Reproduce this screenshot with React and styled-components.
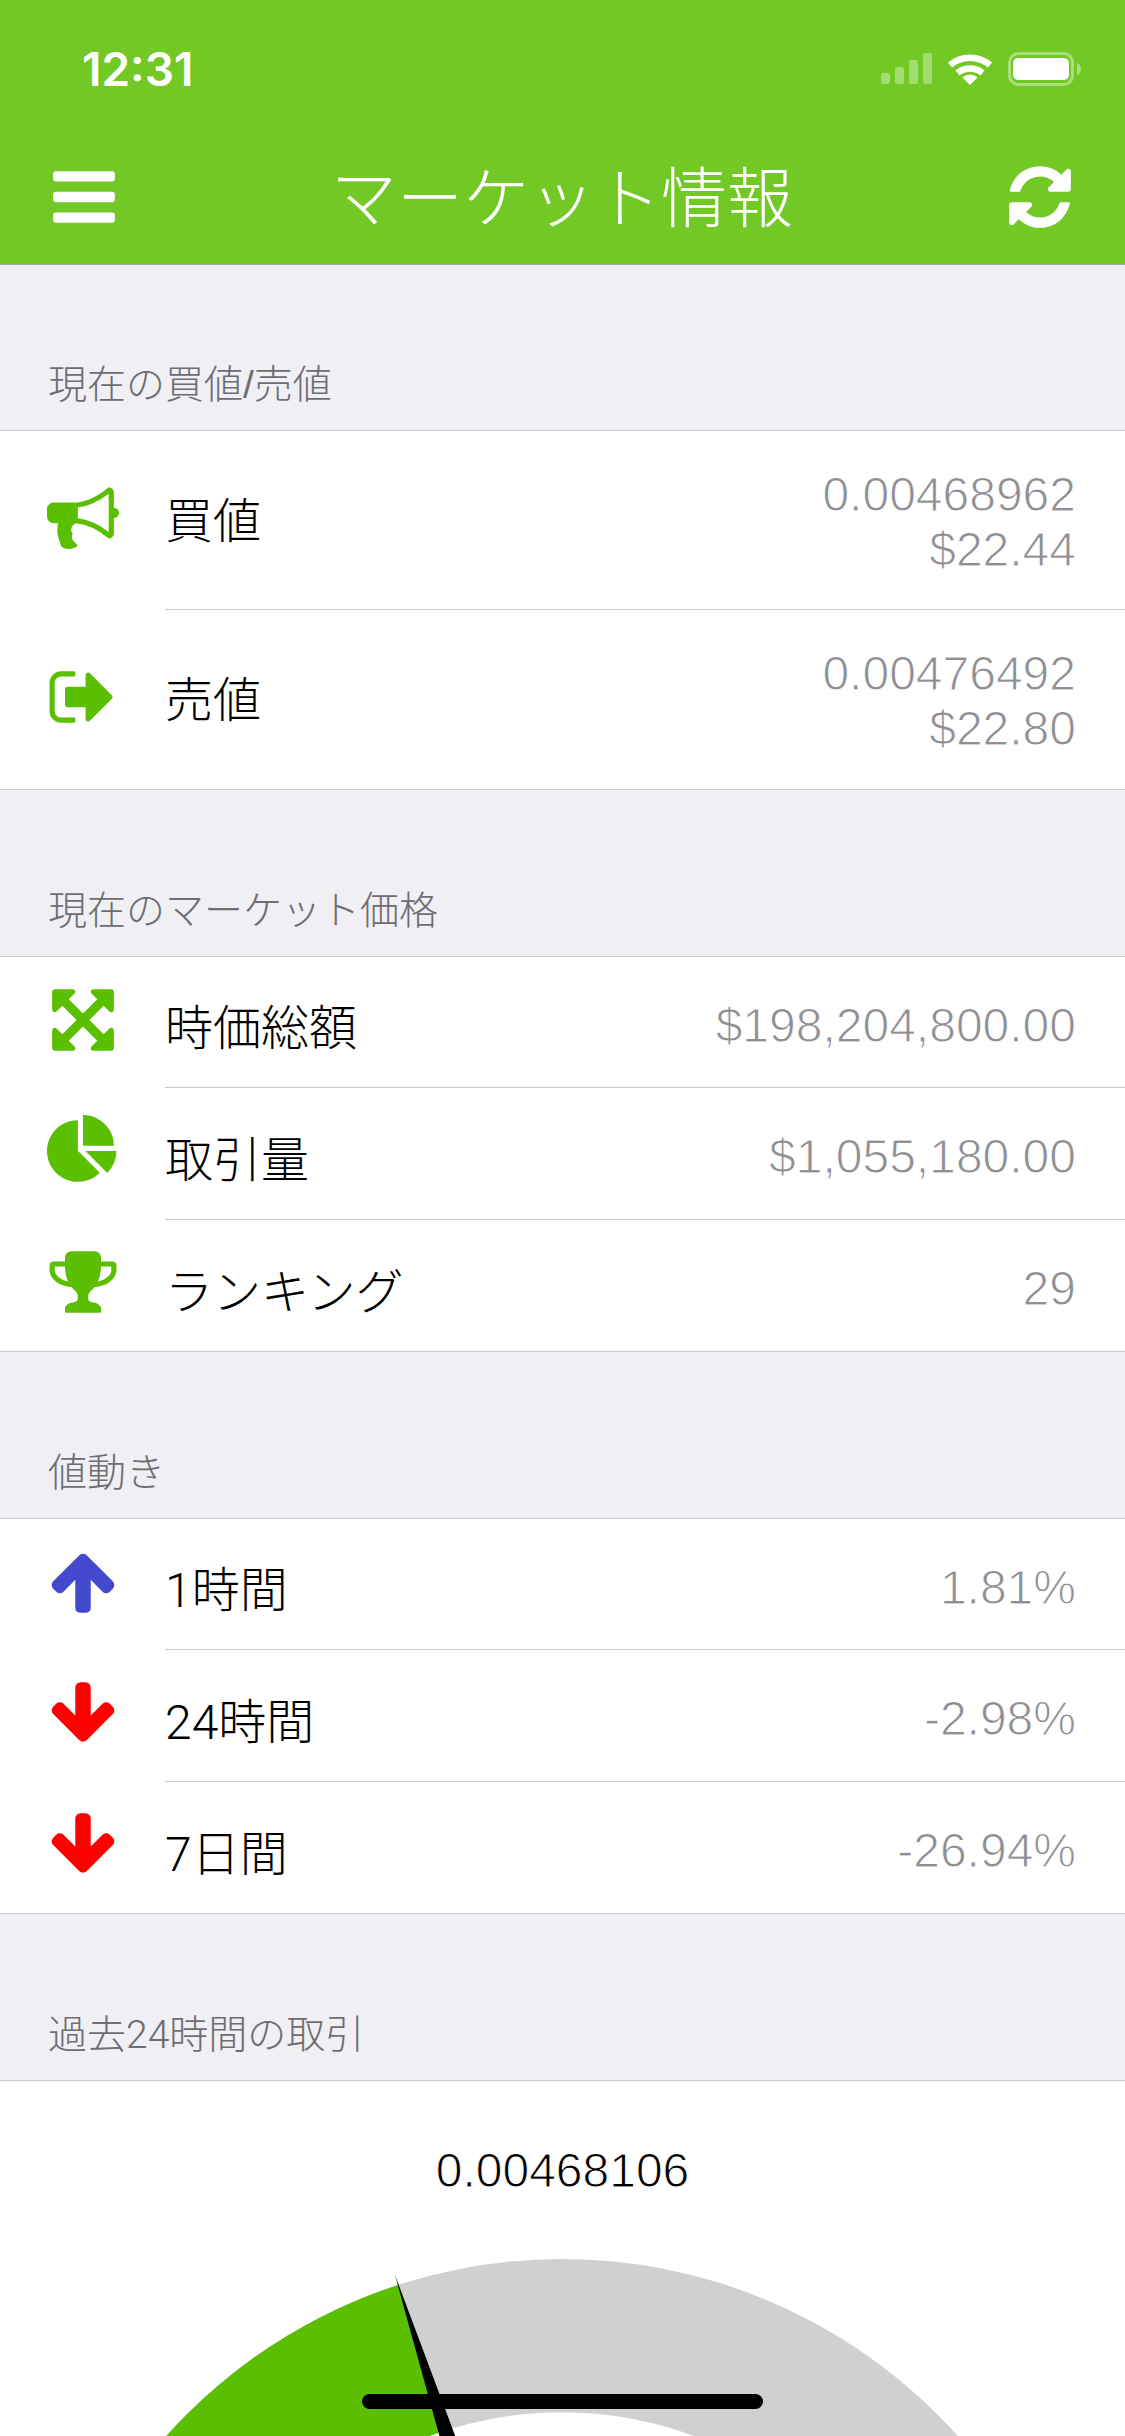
import React from "react";
import styled, { createGlobalStyle } from "styled-components";

const FONT = `Roboto, "Liberation Sans", "Noto Sans CJK JP", sans-serif`;
const HELV = `"Liberation Sans", "Noto Sans CJK JP", sans-serif`;

const Global = createGlobalStyle`
  html, body {
    margin: 0;
    padding: 0;
    width: 1125px;
    height: 2436px;
    overflow: hidden;
    background: #efeff4;
    font-family: ${FONT};
  }
`;

const Page = styled.div`
  width: 1125px;
  height: 2436px;
  overflow: hidden;
  display: flex;
  flex-direction: column;
`;

const Header = styled.header`
  flex: none;
  height: 264px;
  background: #72c926;
  border-bottom: 1px solid #a7a7aa;
  color: #fff;
  display: flex;
  flex-direction: column;
`;

const StatusBar = styled.div`
  height: 138px;
  display: flex;
  align-items: center;
  justify-content: space-between;
  padding: 0 44px 0 82px;
`;

const Clock = styled.span`
  font: 600 46px/1 Inter, "Liberation Sans", sans-serif;
  letter-spacing: 0;
`;

const NavBar = styled.div`
  height: 118px;
  display: flex;
  align-items: center;
  justify-content: space-between;
  padding: 0 49px 0 48px;
`;

const Title = styled.h1`
  margin: 6px 0 0;
  font: 300 66px/1 ${FONT};
  white-space: nowrap;
`;

const Glyph = styled.svg`
  display: block;
  flex: none;
  width: 72px;
  height: 72px;
  fill: ${(p) => p.$color || "currentColor"};
`;

const SectionHeader = styled.div`
  flex: none;
  height: ${(p) => (p.$first ? 165 : 166)}px;
  box-sizing: border-box;
  display: flex;
  align-items: flex-end;
  padding: 0 48px 25px;
  font: 300 39px/40px ${(p) => (p.$first ? HELV : FONT)};
  color: #6d6d72;
`;

const List = styled.section`
  flex: none;
  background: #fff;
  border-top: 1px solid #c8c7cc;
  border-bottom: 1px solid #c8c7cc;
`;

const Row = styled.div`
  height: ${(p) => (p.$tall ? "179px" : "131.33px")};
  display: flex;
  align-items: stretch;
  padding-left: 47px;
`;

const IconSlot = styled.div`
  flex: none;
  width: 118px;
  display: flex;
  align-items: center;
  & > svg {
    margin-top: -6px;
  }
`;

const Body = styled.div`
  flex: 1;
  display: flex;
  align-items: center;
  justify-content: space-between;
  padding-right: 49px;
  box-sizing: border-box;
  border-bottom: ${(p) => (p.$last ? "0" : "1px solid #c8c7cc")};
`;

const Label = styled.span`
  font: 300 48px/1.2 ${FONT};
  color: #000;
  margin-top: ${(p) => (p.$tall ? 3 : 14)}px;
`;

const Value = styled.div`
  font: 400 48px/55px ${HELV};
  color: #8e8e93;
  text-align: right;
  -webkit-text-stroke: 1px #fff;
  margin-top: ${(p) => (p.$tall ? 3 : 7)}px;
`;

const GaugeCard = styled.section`
  flex: 1;
  background: #fff;
  border-top: 1px solid #c8c7cc;
  display: flex;
  flex-direction: column;
  align-items: center;
  padding-top: 62px;
`;

const Price = styled.div`
  font: 400 48px/56px ${HELV};
  color: #000;
  -webkit-text-stroke: 1px #fff;
`;

const GaugeSvg = styled.svg`
  display: block;
  flex: none;
  margin-top: 60px;
  width: 1125px;
  height: 177px;
  overflow: hidden;
`;

const ICONS = {
  bars: "M1664 1344v128q0 26-19 45t-45 19h-1408q-26 0-45-19t-19-45v-128q0-26 19-45t45-19h1408q26 0 45 19t19 45zm0-512v128q0 26-19 45t-45 19h-1408q-26 0-45-19t-19-45v-128q0-26 19-45t45-19h1408q26 0 45 19t19 45zm0-512v128q0 26-19 45t-45 19h-1408q-26 0-45-19t-19-45v-128q0-26 19-45t45-19h1408q26 0 45 19t19 45z",
  refresh: "M1639 1056q0 5-1 7-64 268-268 434.5t-478 166.5q-146 0-282.5-55t-243.5-157l-129 129q-19 19-45 19t-45-19-19-45v-448q0-26 19-45t45-19h448q26 0 45 19t19 45-19 45l-137 137q71 66 161 102t187 36q134 0 250-65t186-179q11-17 53-117 8-23 30-23h192q13 0 22.5 9.5t9.5 22.5zm25-800v448q0 26-19 45t-45 19h-448q-26 0-45-19t-19-45 19-45l138-138q-148-137-349-137-134 0-250 65t-186 179q-11 17-53 117-8 23-30 23h-199q-13 0-22.5-9.5t-9.5-22.5v-7q65-268 270-434.5t480-166.5q146 0 284 55.5t245 156.5l130-129q19-19 45-19t45 19 19 45z",
  bullhorn: "M1664 640q53 0 90.5 37.5t37.5 90.5-37.5 90.5-90.5 37.5v384q0 52-38 90t-90 38q-417-347-812-380-58 19-91 66t-31 100.5 40 92.5q-20 33-23 65.5t6 58 33.5 55 48 50 61.5 50.5q-29 58-111.5 83t-168.5 11.5-132-55.5q-7-23-29.5-87.5t-32-94.5-23-89-15-101 3.5-98.5 22-110.5h-122q-66 0-113-47t-47-113v-192q0-66 47-113t113-47h480q435 0 896-384 52 0 90 38t38 90v384zm-128 604v-954q-394 302-768 343v270q377 42 768 341z",
  signOut: "M704 1440q0 4 1 20t.5 26.5-3 23.5-10 19.5-20.5 6.5h-320q-119 0-203.5-84.5t-84.5-203.5v-704q0-119 84.5-203.5t203.5-84.5h320q13 0 22.5 9.5t9.5 22.5q0 4 1 20t.5 26.5-3 23.5-10 19.5-20.5 6.5h-320q-66 0-113 47t-47 113v704q0 66 47 113t113 47h312l11.5 1 11.5 3 8 5.5 7 9 2 13.5zm928-544q0 26-19 45l-544 544q-19 19-45 19t-45-19-19-45v-288h-448q-26 0-45-19t-19-45v-384q0-26 19-45t45-19h448v-288q0-26 19-45t45-19 45 19l544 544q19 19 19 45z",
  expand: "M1411 541l-355 355 355 355 144-144q29-31 70-14 39 17 39 59v448q0 26-19 45t-45 19h-448q-42 0-59-40-17-39 14-69l144-144-355-355-355 355 144 144q31 30 14 69-17 40-59 40h-448q-26 0-45-19t-19-45v-448q0-42 40-59 39-17 69 14l144 144 355-355-355-355-144 144q-19 19-45 19-12 0-24-5-40-17-40-59v-448q0-26 19-45t45-19h448q42 0 59 40 17 39-14 69l-144 144 355 355 355-355-144-144q-31-30-14-69 17-40 59-40h448q26 0 45 19t19 45v448q0 42-39 59-13 5-25 5-26 0-45-19z",
  pie: "M768 890l546 546q-106 108-247.5 168t-298.5 60q-209 0-385.5-103t-279.5-279.5-103-385.5 103-385.5 279.5-279.5 385.5-103v762zm187 6h773q0 157-60 298.5t-168 247.5zm709-128h-768v-768q209 0 385.5 103t279.5 279.5 103 385.5z",
  trophy: "M522 883q-74-162-74-371h-256v96q0 78 94.5 162t235.5 113zm1078-275v-96h-256q0 209-74 371 141-29 235.5-113t94.5-162zm128-128v128q0 71-41.5 143t-112 130-173 97.5-215.5 44.5q-42 54-95 95-38 34-52.5 72.5t-14.5 89.5q0 54 30.5 91t97.5 37q75 0 133.5 45.5t58.5 114.5v64q0 14-9 23t-23 9h-832q-14 0-23-9t-9-23v-64q0-69 58.5-114.5t133.5-45.5q67 0 97.5-37t30.5-91q0-51-14.5-89.5t-52.5-72.5q-53-41-95-95-113-5-215.5-44.5t-173-97.5-112-130-41.5-143v-128q0-40 28-68t68-28h288v-96q0-66 47-113t113-47h576q66 0 113 47t47 113v96h288q40 0 68 28t28 68z",
  up: "M1675 971q0 51-37 90l-75 75q-38 38-91 38-54 0-90-38l-294-293v704q0 52-37.5 84.5t-90.5 32.5h-128q-53 0-90.5-32.5t-37.5-84.5v-704l-294 293q-36 38-90 38t-90-38l-75-75q-38-38-38-90 0-53 38-91l651-651q35-37 90-37 54 0 91 37l651 651q37 39 37 91z",
  down: "M1675 832q0 53-37 90l-651 652q-39 37-91 37-53 0-90-37l-651-652q-38-36-38-90 0-53 38-91l74-75q39-37 91-37 53 0 90 37l294 294v-704q0-52 38-90t90-38h128q52 0 90 38t38 90v704l294-294q37-37 90-37 52 0 91 37l75 75q37 39 37 91z",
};

const Fa = ({ name, color }) => (
  <Glyph viewBox="0 0 1792 1792" $color={color} aria-hidden="true">
    <path d={ICONS[name]} />
  </Glyph>
);

const StatusSvg = styled.svg`
  display: block;
  flex: none;
  width: 200px;
  height: 34px;
`;

const StatusIcons = () => (
  <StatusSvg viewBox="881 52 200 34" aria-hidden="true">
    <g fill="#fff" fillOpacity="0.35">
      <rect x="881" y="73" width="9" height="11" rx="2.5" />
      <rect x="895" y="67" width="9" height="17" rx="2.5" />
      <rect x="909" y="60" width="9" height="24" rx="2.5" />
      <rect x="923" y="53" width="9" height="31" rx="2.5" />
    </g>
    <g fill="none" stroke="#fff" strokeWidth="6.5">
      <path d="M950 65 A31 31 0 0 1 990 65" />
      <path d="M957.5 73 A20 20 0 0 1 982.5 73" />
    </g>
    <path d="M970 85 L962.5 77.5 A11 11 0 0 1 977.5 77.5 Z" fill="#fff" />
    <rect x="1009.5" y="53.5" width="63" height="31" rx="9" fill="none" stroke="#fff" strokeOpacity="0.4" strokeWidth="3" />
    <rect x="1013" y="58" width="56" height="22" rx="5" fill="#fff" />
    <path d="M1077 63 Q1081 65 1081 69 Q1081 73 1077 75 Z" fill="#fff" fillOpacity="0.4" />
  </StatusSvg>
);

const Gauge = () => {
  const cx = 562;
  const cy = 531;
  const R = 531;
  const r = 378;
  return (
    <GaugeSvg viewBox="0 0 1125 177" aria-hidden="true">
      <path d={`M${cx - R} ${cy} A${R} ${R} 0 0 1 ${cx + R} ${cy} H${cx + r} A${r} ${r} 0 0 0 ${cx - r} ${cy} Z`} fill="#d0d0d0" />
      <path d={`M${cx - R} ${cy} A${R} ${R} 0 0 1 398 26 L445.3 171.5 A${r} ${r} 0 0 0 ${cx - r} ${cy} Z`} fill="#5abf00" />
      <polygon points="395,16 585,524 539,538" fill="#000" />
      <rect x="362" y="135" width="401" height="15" rx="7.5" fill="#000" />
    </GaugeSvg>
  );
};

const SECTIONS = [
  {
    title: "現在の買値/売値",
    tall: true,
    rows: [
      { icon: "bullhorn", label: "買値", value: ["0.00468962", "$22.44"] },
      { icon: "signOut", label: "売値", value: ["0.00476492", "$22.80"] },
    ],
  },
  {
    title: "現在のマーケット価格",
    rows: [
      { icon: "expand", label: "時価総額", value: ["$198,204,800.00"] },
      { icon: "pie", label: "取引量", value: ["$1,055,180.00"] },
      { icon: "trophy", label: "ランキング", value: ["29"] },
    ],
  },
  {
    title: "値動き",
    rows: [
      { icon: "up", color: "#4349cf", label: "1時間", value: ["1.81%"] },
      { icon: "down", color: "#ff0000", label: "24時間", value: ["-2.98%"] },
      { icon: "down", color: "#ff0000", label: "7日間", value: ["-26.94%"] },
    ],
  },
];

export default function App() {
  return (
    <Page>
      <Global />
      <Header>
        <StatusBar>
          <Clock>12:31</Clock>
          <StatusIcons />
        </StatusBar>
        <NavBar>
          <Fa name="bars" />
          <Title>マーケット情報</Title>
          <Fa name="refresh" />
        </NavBar>
      </Header>
      {SECTIONS.map((s, si) => (
        <React.Fragment key={s.title}>
          <SectionHeader $first={si === 0}>{s.title}</SectionHeader>
          <List>
            {s.rows.map((row, i) => (
              <Row key={row.label} $tall={s.tall}>
                <IconSlot>
                  <Fa name={row.icon} color={row.color || "#5abf00"} />
                </IconSlot>
                <Body $last={i === s.rows.length - 1}>
                  <Label $tall={s.tall}>{row.label}</Label>
                  <Value $tall={s.tall}>
                    {row.value.map((v) => (
                      <div key={v}>{v}</div>
                    ))}
                  </Value>
                </Body>
              </Row>
            ))}
          </List>
        </React.Fragment>
      ))}
      <SectionHeader>過去24時間の取引</SectionHeader>
      <GaugeCard>
        <Price>0.00468106</Price>
        <Gauge />
      </GaugeCard>
    </Page>
  );
}
